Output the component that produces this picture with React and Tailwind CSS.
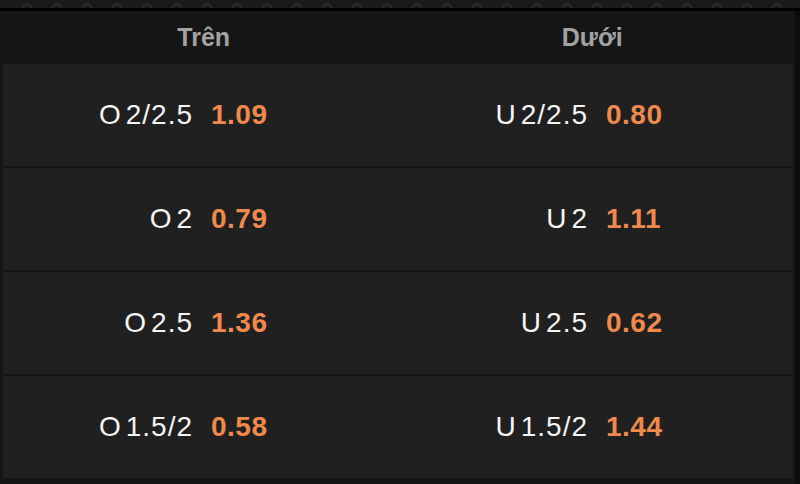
import React from "react";

const rows = [
  ["O", "2/2.5", "1.09", "U", "2/2.5", "0.80"],
  ["O", "2", "0.79", "U", "2", "1.11"],
  ["O", "2.5", "1.36", "U", "2.5", "0.62"],
  ["O", "1.5/2", "0.58", "U", "1.5/2", "1.44"],
];

function Cell({ p, v, o }) {
  return (
    <div className="flex items-center">
      <div className="w-1/2 pr-[9px] text-right text-[28px] leading-none tracking-[1px] text-[#f4f4f4]">
        {p}
        <span className="ml-[4px]">{v}</span>
      </div>
      <div className="w-1/2 pl-[9px] text-[28px] leading-none font-bold tracking-[0.5px] text-[#ef8a4c]">{o}</div>
    </div>
  );
}

export default function App() {
  const arcs = Array.from({ length: 27 }, (_, i) => i);
  return (
    <div
      className="w-[800px] h-[484px] bg-[#0c0c0c] overflow-hidden flex flex-col"
      style={{ fontFamily: '"Liberation Sans", Arial, sans-serif' }}
    >
      <div className="h-[8px] bg-[#1a1a1a] shrink-0">
        <svg width="800" height="8" className="block">
          {arcs.map((i) => (
            <path
              key={i}
              d={`M ${22 + i * 30} 8 Q ${27 + i * 30} 0 ${32 + i * 30} 8`}
              stroke="#2c2c2c"
              strokeWidth="2"
              fill="none"
            />
          ))}
        </svg>
      </div>
      <div className="h-[3px] bg-black shrink-0" />
      <div className="h-[53px] shrink-0 bg-[#151515] mr-[5px] grid grid-cols-2 items-center">
        <div className="text-center text-[25px] font-bold text-[#a2a2a2] pl-[10px]">Trên</div>
        <div className="text-center text-[25px] font-bold text-[#a2a2a2] pr-[8px]">Dưới</div>
      </div>
      <div className="flex flex-col gap-[2px] bg-[#151515] mr-[5px]">
        {rows.map((r, i) => (
          <div key={i} className="h-[102px] ml-[3px] mr-[2px] bg-[#202020] grid grid-cols-[398px_1fr] items-center">
            <Cell p={r[0]} v={r[1]} o={r[2]} />
            <Cell p={r[3]} v={r[4]} o={r[5]} />
          </div>
        ))}
      </div>
      <div className="flex-1 bg-[#151515] mr-[5px]" />
    </div>
  );
}
